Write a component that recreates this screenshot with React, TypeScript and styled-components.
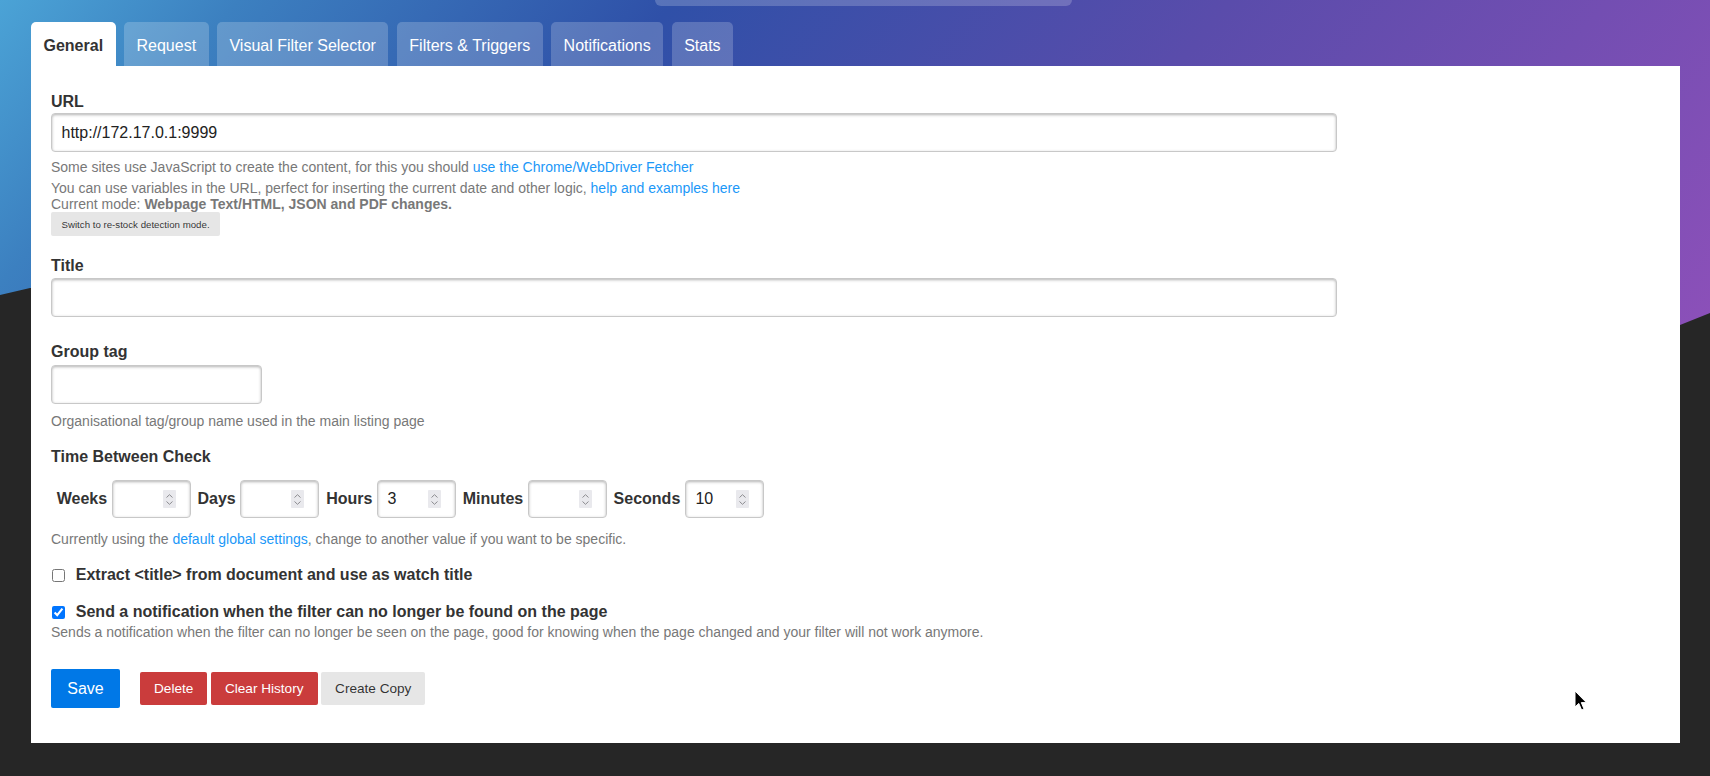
import React, { FC } from 'react';
import styled, { createGlobalStyle } from 'styled-components';

const GlobalStyle = createGlobalStyle`
  html, body {
    margin: 0;
    padding: 0;
    background: #262626;
  }

  body {
    font-family: "Liberation Sans", Arial, Helvetica, sans-serif;
    font-size: 16px;
    color: #333;
  }

  * {
    box-sizing: border-box;
  }
`;

const Page = styled.div`
  position: relative;
  height: 776px;
  overflow: hidden;
`;

// gradient band behind the header, cut with a slanted bottom edge
const Backdrop = styled.div`
  position: absolute;
  top: 0;
  left: 0;
  width: 100%;
  height: 330px;
  background: linear-gradient(
    130deg,
    #4ba3d6 0%,
    #3c80c0 12%,
    #2f50a8 34%,
    #5a4cab 62%,
    #8c50b9 100%
  );
  clip-path: polygon(0 0, 100% 0, 100% 313px, calc(100% - 30px) 325px, 30px 288px, 0 295px);
`;

const Shell = styled.div`
  position: relative;
  z-index: 1;
  padding: 0 30px 0 31px;
`;

const TopStrip = styled.div`
  height: 6px;
  padding-left: 624px;
`;

const TopPill = styled.div`
  width: 417px;
  height: 6px;
  background: rgba(255, 255, 255, 0.2);
  border-radius: 0 0 8px 8px;
`;

const TabBar = styled.nav`
  display: flex;
  gap: 8.4px;
  margin-top: 16px;
`;

const Tab = styled.a<{ $active?: boolean }>`
  display: flex;
  align-items: center;
  height: 44px;
  padding: 3px 12.5px 0;
  border-radius: 5px 5px 0 0;
  font-size: 16px;
  text-decoration: none;
  color: ${(p) => (p.$active ? '#333' : '#fff')};
  font-weight: ${(p) => (p.$active ? 'bold' : 'normal')};
  background: ${(p) => (p.$active ? '#fff' : 'rgba(255, 255, 255, 0.2)')};
`;

const Panel = styled.form`
  background: #fff;
  padding: 26px 20px 35px;
`;

const Field = styled.div<{ $top?: number }>`
  margin-top: ${(p) => p.$top ?? 0}px;
`;

const Label = styled.label<{ $gap?: number }>`
  display: block;
  font-size: 16px;
  font-weight: bold;
  line-height: 20px;
  color: #333;
  margin-bottom: ${(p) => p.$gap ?? 2}px;
`;

const TextInput = styled.input<{ $width: number }>`
  display: block;
  width: ${(p) => p.$width}px;
  height: 39px;
  padding: 0 9.5px;
  font-family: inherit;
  font-size: 16px;
  color: #222;
  background: #fff;
  border: 1px solid #c8c8c8;
  border-radius: 4px;
  box-shadow: inset 0 1px 3px rgba(0, 0, 0, 0.3);
  outline: none;
`;

const Help = styled.div<{ $top?: number }>`
  margin-top: ${(p) => p.$top ?? 0}px;
  font-size: 14px;
  line-height: 16px;
  color: #787878;
`;

const Link = styled.a`
  color: #1b98f8;
  text-decoration: none;
`;

const SmallButton = styled.button`
  display: block;
  height: 24px;
  margin-top: 0.5px;
  padding: 0 10.5px;
  font-family: inherit;
  font-size: 9.7px;
  color: rgba(0, 0, 0, 0.8);
  background: #e6e6e6;
  border: 0;
  border-radius: 2px;
`;

const TimeRow = styled.div`
  display: flex;
  align-items: center;
  margin-top: 13px;
  padding-left: 5.7px;
`;

const UnitLabel = styled.label`
  font-size: 16px;
  font-weight: bold;
  color: #333;
  margin-right: 4.6px;
`;

const NumberBox = styled.span`
  display: flex;
  align-items: center;
  width: 79px;
  height: 38px;
  margin-right: 6.8px;
  padding: 0 14px 0 9.5px;
  background: #fff;
  border: 1px solid #c8c8c8;
  border-radius: 4px;
  box-shadow: inset 0 1px 3px rgba(0, 0, 0, 0.3);
`;

const NumberInput = styled.input`
  flex: 1;
  min-width: 0;
  padding: 0;
  border: 0;
  outline: none;
  background: transparent;
  font-family: inherit;
  font-size: 16px;
  color: #222;
  -moz-appearance: textfield;

  &::-webkit-inner-spin-button,
  &::-webkit-outer-spin-button {
    -webkit-appearance: none;
    margin: 0;
  }
`;

const Spinner = styled.span`
  flex: none;
  display: flex;
  flex-direction: column;
  align-items: center;
  justify-content: center;
  gap: 3px;
  width: 13px;
  height: 18px;
  background: #e9e9ed;
  border-radius: 1px;
`;

const CheckRow = styled.label<{ $top: number }>`
  display: flex;
  align-items: center;
  margin-top: ${(p) => p.$top}px;
  line-height: 20px;
  font-size: 16px;
  font-weight: bold;
  color: #333;
`;

const CheckBox = styled.input`
  width: 13px;
  height: 13px;
  margin: 0 10.5px 0 1.3px;
`;

const ActionBar = styled.div`
  display: flex;
  align-items: center;
  gap: 3.6px;
  margin-top: 29px;
`;

const ActionButton = styled.button<{ $tone: 'primary' | 'danger' | 'plain' }>`
  height: ${(p) => (p.$tone === 'primary' ? 39 : 33)}px;
  padding: 0 ${(p) => (p.$tone === 'primary' ? 16.3 : 14)}px;
  margin-right: ${(p) => (p.$tone === 'primary' ? 16.4 : 0)}px;
  font-family: inherit;
  font-size: ${(p) => (p.$tone === 'primary' ? 16 : 13.6)}px;
  border: 0;
  border-radius: 2px;
  color: ${(p) => (p.$tone === 'plain' ? 'rgba(0, 0, 0, 0.8)' : '#fff')};
  background: ${(p) =>
    p.$tone === 'primary' ? '#0078e7' : p.$tone === 'danger' ? '#ca3c3c' : '#e6e6e6'};
`;

const Cursor = styled.svg`
  position: absolute;
  left: 1574px;
  top: 690px;
  z-index: 2;
`;

const TABS = ['General', 'Request', 'Visual Filter Selector', 'Filters & Triggers', 'Notifications', 'Stats'];

const UNITS: { label: string; value: string }[] = [
  { label: 'Weeks', value: '' },
  { label: 'Days', value: '' },
  { label: 'Hours', value: '3' },
  { label: 'Minutes', value: '' },
  { label: 'Seconds', value: '10' },
];

const Chevron: FC<{ up?: boolean }> = ({ up }) => (
  <svg width="7" height="4" viewBox="0 0 7 4">
    <path
      d={up ? 'M0.5 3.5 L3.5 0.7 L6.5 3.5' : 'M0.5 0.5 L3.5 3.3 L6.5 0.5'}
      fill="none"
      stroke="#8b8b8f"
      strokeWidth="1"
    />
  </svg>
);

const App: FC = () => {
  return (
    <Page>
      <GlobalStyle />
      <Backdrop />
      <Shell>
        <TopStrip>
          <TopPill />
        </TopStrip>
        <TabBar>
          {TABS.map((t, i) => (
            <Tab key={t} $active={i === 0} href="#">
              {t}
            </Tab>
          ))}
        </TabBar>

        <Panel onSubmit={(e) => e.preventDefault()}>
          <Field>
            <Label htmlFor="url" $gap={1}>URL</Label>
            <TextInput id="url" $width={1286} defaultValue="http://172.17.0.1:9999" />
            <Help $top={7}>
              Some sites use JavaScript to create the content, for this you should{' '}
              <Link href="#">use the Chrome/WebDriver Fetcher</Link>
            </Help>
            <Help $top={4.5}>
              You can use variables in the URL, perfect for inserting the current date and other logic,{' '}
              <Link href="#">help and examples here</Link>
              <br />
              Current mode: <b>Webpage Text/HTML, JSON and PDF changes.</b>
            </Help>
            <SmallButton type="button">Switch to re-stock detection mode.</SmallButton>
          </Field>

          <Field $top={19.5}>
            <Label htmlFor="title" $gap={2.5}>Title</Label>
            <TextInput id="title" $width={1286} />
          </Field>

          <Field $top={25}>
            <Label htmlFor="tag" $gap={3}>Group tag</Label>
            <TextInput id="tag" $width={211} />
            <Help $top={8.5}>Organisational tag/group name used in the main listing page</Help>
          </Field>

          <Field $top={18.5}>
            <Label $gap={0}>Time Between Check</Label>
            <TimeRow>
              {UNITS.map((u) => (
                <React.Fragment key={u.label}>
                  <UnitLabel>{u.label}</UnitLabel>
                  <NumberBox>
                    <NumberInput type="number" defaultValue={u.value} />
                    <Spinner>
                      <Chevron up />
                      <Chevron />
                    </Spinner>
                  </NumberBox>
                </React.Fragment>
              ))}
            </TimeRow>
            <Help $top={13}>
              Currently using the <Link href="#">default global settings</Link>, change to another value if you want
              to be specific.
            </Help>
          </Field>

          <CheckRow $top={18}>
            <CheckBox type="checkbox" />
            Extract &lt;title&gt; from document and use as watch title
          </CheckRow>

          <CheckRow $top={17}>
            <CheckBox type="checkbox" defaultChecked />
            Send a notification when the filter can no longer be found on the page
          </CheckRow>
          <Help $top={2}>
            Sends a notification when the filter can no longer be seen on the page, good for knowing when the page
            changed and your filter will not work anymore.
          </Help>

          <ActionBar>
            <ActionButton type="submit" $tone="primary">Save</ActionButton>
            <ActionButton type="button" $tone="danger">Delete</ActionButton>
            <ActionButton type="button" $tone="danger">Clear History</ActionButton>
            <ActionButton type="button" $tone="plain">Create Copy</ActionButton>
          </ActionBar>
        </Panel>
      </Shell>

      <Cursor width="14" height="22" viewBox="0 0 14 22">
        <path d="M1 1 L1 17 L4.8 13.4 L7.6 20 L10 19 L7.3 12.6 L12.4 12.6 Z" fill="#000" stroke="#fff" strokeWidth="1" />
      </Cursor>
    </Page>
  );
};

export default App;
